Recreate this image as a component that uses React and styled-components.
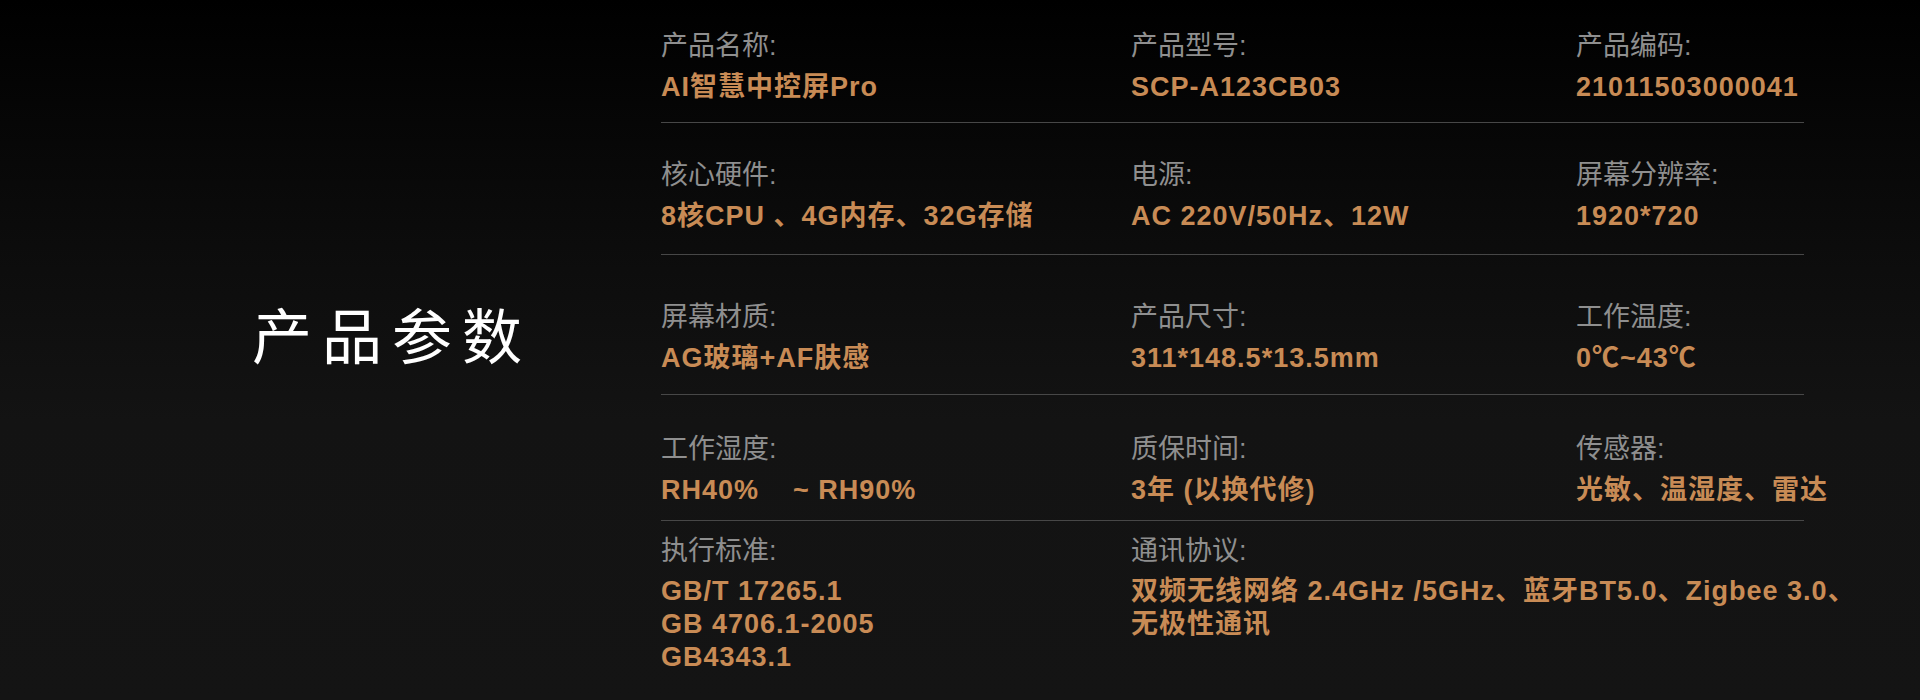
import styled, { createGlobalStyle } from "styled-components";

const GlobalStyle = createGlobalStyle`
  html, body {
    margin: 0;
    padding: 0;
    background: #000;
  }
  * {
    box-sizing: border-box;
  }
`;

const Page = styled.div`
  width: 100%;
  height: 700px;
  display: flex;
  overflow: hidden;
  background: linear-gradient(180deg, #000000 0%, #0c0c0c 35%, #131313 60%, #141414 100%);
  font-family: "Liberation Sans", "Noto Sans CJK SC", sans-serif;
`;

const HeadingSide = styled.div`
  width: 661px;
  flex-shrink: 0;
  display: flex;
  align-items: center;
  padding-left: 252px;
  padding-bottom: 34px;
`;

const Heading = styled.h1`
  margin: 0;
  font-family: "Noto Sans CJK SC", sans-serif;
  font-weight: 400;
  font-size: 60px;
  line-height: 1;
  letter-spacing: 10px;
  color: #ffffff;
`;

const SpecTable = styled.div`
  width: 1143px;
  display: flex;
  flex-direction: column;
`;

const SpecRow = styled.div`
  display: grid;
  grid-template-columns: 470px 445px 1fr;
  padding-top: ${props => props.$top}px;
  padding-bottom: ${props => props.$bottom}px;
  border-bottom: ${props => props.$last ? "none" : "1px solid #474747"};
`;

const SpecCell = styled.div`
  display: flex;
  flex-direction: column;
  gap: 7px;
  grid-column: ${props => props.$span ? "2 / 4" : "auto"};
`;

const SpecLabel = styled.div`
  font-size: 27px;
  line-height: 34px;
  color: #8f8f8f;
  font-weight: 400;
  white-space: nowrap;
`;

const SpecValue = styled.div`
  font-size: 27px;
  line-height: ${props => props.$multi ? 33 : 34}px;
  letter-spacing: 1px;
  color: #c88b55;
  font-weight: 700;
  white-space: pre;
`;

const rows = [
  {
    top: 29, bottom: 18,
    cells: [
      ["产品名称:", "AI智慧中控屏Pro"],
      ["产品型号:", "SCP-A123CB03"],
      ["产品编码:", "21011503000041"],
    ],
  },
  {
    top: 35, bottom: 21,
    cells: [
      ["核心硬件:", "8核CPU 、4G内存、32G存储"],
      ["电源:", "AC 220V/50Hz、12W"],
      ["屏幕分辨率:", "1920*720"],
    ],
  },
  {
    top: 45, bottom: 19,
    cells: [
      ["屏幕材质:", "AG玻璃+AF肤感"],
      ["产品尺寸:", "311*148.5*13.5mm"],
      ["工作温度:", "0℃~43℃"],
    ],
  },
  {
    top: 37, bottom: 13,
    cells: [
      ["工作湿度:", "RH40%    ~ RH90%"],
      ["质保时间:", "3年 (以换代修)"],
      ["传感器:", "光敏、温湿度、雷达"],
    ],
  },
];

function App() {
  return (
    <>
      <GlobalStyle />
      <Page>
        <HeadingSide>
          <Heading>产品参数</Heading>
        </HeadingSide>
        <SpecTable>
          {rows.map((row, idx) => (
            <SpecRow key={idx} $top={row.top} $bottom={row.bottom}>
              {row.cells.map(([label, value]) => (
                <SpecCell key={label}>
                  <SpecLabel>{label}</SpecLabel>
                  <SpecValue>{value}</SpecValue>
                </SpecCell>
              ))}
            </SpecRow>
          ))}
          <SpecRow $top={13} $bottom={0} $last>
            <SpecCell>
              <SpecLabel>执行标准:</SpecLabel>
              <SpecValue $multi>{"GB/T 17265.1\nGB 4706.1-2005\nGB4343.1"}</SpecValue>
            </SpecCell>
            <SpecCell $span>
              <SpecLabel>通讯协议:</SpecLabel>
              <SpecValue $multi>{"双频无线网络 2.4GHz /5GHz、蓝牙BT5.0、Zigbee 3.0、\n无极性通讯"}</SpecValue>
            </SpecCell>
          </SpecRow>
        </SpecTable>
      </Page>
    </>
  );
}

export default App;
